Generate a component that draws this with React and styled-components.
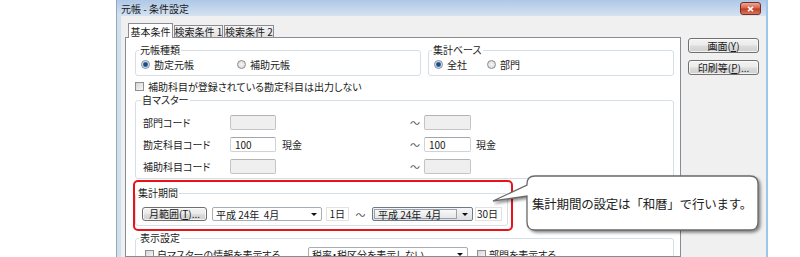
import React from 'react';
import styled, { createGlobalStyle } from 'styled-components';

const GlobalStyle = createGlobalStyle`
  html, body {
    margin: 0;
    padding: 0;
    background: #fff;
  }
  body {
    font-family: "Noto Sans CJK JP", "Noto Sans", sans-serif;
    font-size: 10px;
    color: #1a1a1a;
    font-feature-settings: "palt";
  }
`;

const Page = styled.div`
  position: relative;
  width: 800px;
  height: 257px;
  overflow: hidden;
  display: flex;
  padding-left: 116px;
  box-sizing: border-box;
`;

const Window = styled.div`
  width: 652px;
  display: flex;
  flex-direction: column;
  background: #d2dfed;
  border-left: 1px solid #93a8c0;
  border-right: 2px solid #9cc6ec;
  box-sizing: border-box;
`;

const TitleBar = styled.div`
  height: 16px;
  flex: none;
  display: flex;
  align-items: center;
  justify-content: space-between;
  padding: 0 5px 0 4px;
  background: linear-gradient(#aec8e6, #d5e2f1);
  color: #1a1a1a;
`;

const CloseButton = styled.div`
  align-self: flex-start;
  margin-top: 2px;
  width: 19px;
  height: 11px;
  display: flex;
  align-items: center;
  justify-content: center;
  border: 1px solid #7c2b20;
  border-radius: 3px;
  background: linear-gradient(#eaa897 0%, #d65f48 48%, #c23a22 52%, #d7755d 100%);
`;

const Client = styled.div`
  flex: 1;
  display: flex;
  margin-left: 4px;
  padding: 7px 0 0 4px;
  background: #f0f0f0;
  min-height: 0;
`;

const LeftCol = styled.div`
  width: 556px;
  display: flex;
  flex-direction: column;
`;

const TabRow = styled.div`
  display: flex;
  align-items: flex-start;
  height: 15px;
  margin-bottom: -1px;
  padding-left: 3px;
`;

const Tab = styled.div`
  position: relative;
  z-index: ${p => (p.$active ? 1 : 0)};
  width: ${p => p.$w}px;
  height: ${p => (p.$active ? 15 : 12)}px;
  margin-top: ${p => (p.$active ? 0 : 2)}px;
  margin-left: ${p => (p.$active ? 0 : 1)}px;
  box-sizing: border-box;
  display: flex;
  align-items: center;
  justify-content: center;
  white-space: nowrap;
  border: 1px solid #898c95;
  border-bottom: none;
  background: ${p => (p.$active ? '#fff' : 'linear-gradient(#f4f4f4, #e2e2e2)')};
`;

const Panel = styled.div`
  flex: 1;
  background: #fff;
  border: 1px solid #898c95;
  padding: 6px 6px 0 9px;
  display: flex;
  flex-direction: column;
  overflow: hidden;
`;

const RightCol = styled.div`
  display: flex;
  flex-direction: column;
  gap: 7px;
  margin-left: 7px;
  padding-top: 15px;
`;

const Button = styled.button`
  width: ${p => p.$w}px;
  height: ${p => p.$h}px;
  margin: 0;
  padding: 0;
  font: inherit;
  color: #1a1a1a;
  line-height: 1;
  white-space: nowrap;
  border: 1px solid #707070;
  border-radius: 3px;
  background: linear-gradient(#f3f3f3 0%, #ebebeb 48%, #dddddd 52%, #cfcfcf 100%);
  box-shadow: inset 0 0 0 1px rgba(255, 255, 255, 0.7);
  flex: none;
`;

const GroupRow = styled.div`
  display: flex;
  gap: 7px;
`;

const Group = styled.fieldset`
  margin: 0;
  min-width: 0;
  width: ${p => (p.$w ? `${p.$w}px` : 'auto')};
  flex: ${p => (p.$w ? 'none' : 1)};
  padding: ${p => p.$pad};
  border: 1px solid #d5dfe5;
  border-radius: 3px;
  box-sizing: border-box;
`;

const Legend = styled.legend`
  padding: 0 1px;
  margin-left: ${p => p.$shift}px;
  line-height: 12px;
`;

const OptionRow = styled.div`
  display: flex;
  align-items: center;
  height: ${p => p.$h || 12}px;
`;

const Option = styled.label`
  display: flex;
  align-items: center;
  gap: ${p => p.$gap || 4}px;
  width: ${p => (p.$w ? `${p.$w}px` : 'auto')};
  flex: none;
  white-space: nowrap;
`;

const Radio = styled.span`
  width: 9px;
  height: 9px;
  box-sizing: border-box;
  border-radius: 50%;
  border: 1px solid #8b8b8b;
  background: ${p =>
    p.$on
      ? 'radial-gradient(circle, #1c4c8c 0 1.6px, #5f93cf 2.4px, #e6ecf2 3.2px)'
      : 'radial-gradient(circle, #f6f6f6, #d4d4d4)'};
  flex: none;
`;

const Check = styled.span`
  width: 9px;
  height: 9px;
  box-sizing: border-box;
  border: 1px solid #8f8f8f;
  background: linear-gradient(135deg, #d6d6d6, #f7f7f7);
  flex: none;
`;

const FieldRow = styled.div`
  display: flex;
  align-items: center;
  height: 15px;
`;

const Fields = styled.div`
  display: flex;
  flex-direction: column;
  gap: 7px;
`;

const RowLabel = styled.span`
  width: 87px;
  flex: none;
`;

const TextBox = styled.div`
  width: ${p => p.$w}px;
  height: 15px;
  box-sizing: border-box;
  flex: none;
  border: 1px solid ${p => (p.$off ? '#c4c4c4' : '#cfd2d6')};
  border-top-color: ${p => (p.$off ? '#b3b3b3' : '#a0a6ae')};
  border-radius: 2px;
  background: ${p => (p.$off ? '#efefef' : '#fff')};
  padding: 0 4px;
  line-height: 13px;
`;

const Unit = styled.span`
  width: ${p => (p.$w ? `${p.$w}px` : 'auto')};
  padding-left: ${p => p.$pl}px;
  box-sizing: border-box;
  flex: none;
`;

const Tilde = styled.span`
  width: ${p => p.$w}px;
  flex: none;
  text-align: ${p => p.$align || 'left'};
  color: #555;
`;

const Highlight = styled.div`
  margin: 1px 0 0 -2px;
  width: 380px;
  box-sizing: border-box;
  border: 2px solid #ec1119;
  border-radius: 5px;
  padding: 5px 3px 3px 0;
`;

const Combo = styled.div`
  width: ${p => p.$w}px;
  height: 14px;
  box-sizing: border-box;
  flex: none;
  display: flex;
  align-items: stretch;
  margin-left: ${p => p.$ml || 0}px;
  border: 1px solid ${p => (p.$hot ? '#707a86' : '#a7adb5')};
  border-radius: 2px;
  background: ${p => (p.$hot ? 'linear-gradient(#f5f6f7, #dcdfe3)' : '#fff')};
`;

const ComboText = styled.span`
  flex: 1;
  min-width: 0;
  display: flex;
  align-items: center;
  padding-left: 3px;
  white-space: pre;
  overflow: visible;
  margin: ${p => (p.$hot ? '1px 0 1px 1px' : 0)};
  border: ${p => (p.$hot ? '1px solid #9aa3ad' : 'none')};
  background: ${p => (p.$hot ? 'linear-gradient(#f9f9f9, #e4e6e8)' : 'transparent')};
`;

const ComboArrow = styled.span`
  width: 15px;
  flex: none;
  display: flex;
  align-items: center;
  justify-content: center;
  &::after {
    content: '';
    border-style: solid;
    border-width: 3px 3px 0 3px;
    border-color: #111 transparent transparent transparent;
  }
`;

const DayBox = styled.div`
  width: ${p => p.$w}px;
  height: 14px;
  box-sizing: border-box;
  flex: none;
  margin-left: ${p => p.$ml}px;
  border: 1px solid #e2e2e2;
  text-align: right;
  padding-right: 3px;
  line-height: 12px;
`;

const Callout = styled.div`
  position: absolute;
  left: 490px;
  top: 174px;
  width: 274px;
  height: 58px;
  display: flex;
  align-items: center;
  padding-left: 42px;
  box-sizing: border-box;
`;

const CalloutShape = styled.svg`
  position: absolute;
  left: 0;
  top: 0;
  overflow: visible;
  filter: drop-shadow(2px 2px 1.5px rgba(0, 0, 0, 0.45));
`;

const CalloutText = styled.span`
  position: relative;
  font-size: 12.5px;
  font-feature-settings: normal;
  letter-spacing: -0.2px;
  color: #222;
  white-space: nowrap;
`;

const App = () => (
  <Page>
    <GlobalStyle />
    <Window>
      <TitleBar>
        <span>元帳 - 条件設定</span>
        <CloseButton>
          <svg width="7" height="6" viewBox="0 0 7 6">
            <path d="M1 0.8 L6 5.2 M6 0.8 L1 5.2" stroke="#fff" strokeWidth="1.6" />
          </svg>
        </CloseButton>
      </TitleBar>
      <Client>
        <LeftCol>
          <TabRow>
            <Tab $active $w={45}>基本条件</Tab>
            <Tab $w={49}>検索条件 1</Tab>
            <Tab $w={50}>検索条件 2</Tab>
          </TabRow>
          <Panel>
            <GroupRow>
              <Group $w={286} $pad="2px 8px 5px 5px">
                <Legend $shift={-2}>元帳種類</Legend>
                <OptionRow>
                  <Option $w={96}>
                    <Radio $on />
                    勘定元帳
                  </Option>
                  <Option>
                    <Radio />
                    補助元帳
                  </Option>
                </OptionRow>
              </Group>
              <Group $pad="2px 8px 5px 5px">
                <Legend $shift={-2}>集計ベース</Legend>
                <OptionRow>
                  <Option $w={53}>
                    <Radio $on />
                    全社
                  </Option>
                  <Option>
                    <Radio />
                    部門
                  </Option>
                </OptionRow>
              </Group>
            </GroupRow>

            <OptionRow style={{ marginTop: 4 }}>
              <Option>
                <Check />
                補助科目が登録されている勘定科目は出力しない
              </Option>
            </OptionRow>

            <Group $pad="9px 8px 4px 7px" style={{ marginTop: 2 }}>
              <Legend $shift={-2}>自マスター</Legend>
              <Fields>
                <FieldRow>
                  <RowLabel>部門コード</RowLabel>
                  <TextBox $w={46} $off />
                  <Unit $w={134} $pl={6} />
                  <Tilde $w={14}>～</Tilde>
                  <TextBox $w={47} $off />
                </FieldRow>
                <FieldRow>
                  <RowLabel>勘定科目コード</RowLabel>
                  <TextBox $w={46}>100</TextBox>
                  <Unit $w={134} $pl={6}>現金</Unit>
                  <Tilde $w={14}>～</Tilde>
                  <TextBox $w={47}>100</TextBox>
                  <Unit $pl={5}>現金</Unit>
                </FieldRow>
                <FieldRow>
                  <RowLabel>補助科目コード</RowLabel>
                  <TextBox $w={46} $off />
                  <Unit $w={134} $pl={6} />
                  <Tilde $w={14}>～</Tilde>
                  <TextBox $w={47} $off />
                </FieldRow>
              </Fields>
            </Group>

            <Highlight>
              <Group $pad="8px 6px 4px 6px">
                <Legend $shift={-5}>集計期間</Legend>
                <OptionRow $h={14}>
                  <Button $w={65} $h={14}>
                    月範囲(<u>T</u>)...
                  </Button>
                  <Combo $w={110} $ml={5}>
                    <ComboText>平成 24年  4月</ComboText>
                    <ComboArrow />
                  </Combo>
                  <DayBox $w={23} $ml={4}>1日</DayBox>
                  <Tilde $w={23} $align="center">～</Tilde>
                  <Combo $w={101} $hot>
                    <ComboText $hot>平成 24年  4月</ComboText>
                    <ComboArrow />
                  </Combo>
                  <DayBox $w={27} $ml={2}>30日</DayBox>
                </OptionRow>
              </Group>
            </Highlight>

            <Group $pad="4px 8px 6px 9px" style={{ marginTop: 1 }}>
              <Legend $shift={-6}>表示設定</Legend>
              <OptionRow>
                <Option $w={163} $gap={3}>
                  <Check />
                  自マスターの情報を表示する
                </Option>
                <Combo $w={160}>
                  <ComboText>税率・税区分を表示しない</ComboText>
                  <ComboArrow />
                </Combo>
                <Option $gap={3} style={{ marginLeft: 9 }}>
                  <Check />
                  部門を表示する
                </Option>
              </OptionRow>
            </Group>
          </Panel>
        </LeftCol>
        <RightCol>
          <Button $w={71} $h={15}>
            画面(<u>Y</u>)
          </Button>
          <Button $w={71} $h={15}>
            印刷等(<u>P</u>)...
          </Button>
        </RightCol>
      </Client>
    </Window>

    <Callout>
      <CalloutShape width="274" height="62" viewBox="0 0 274 62">
        <path
          d="M45 2 H260 Q268 2 268 10 V48 Q268 56 260 56 H45 Q37 56 37 48 V22 L3 27 L37 11 V10 Q37 2 45 2 Z"
          fill="#fff"
          stroke="#6a6a6a"
          strokeWidth="1.3"
        />
      </CalloutShape>
      <CalloutText>集計期間の設定は「和暦」で行います。</CalloutText>
    </Callout>
  </Page>
);

export default App;
